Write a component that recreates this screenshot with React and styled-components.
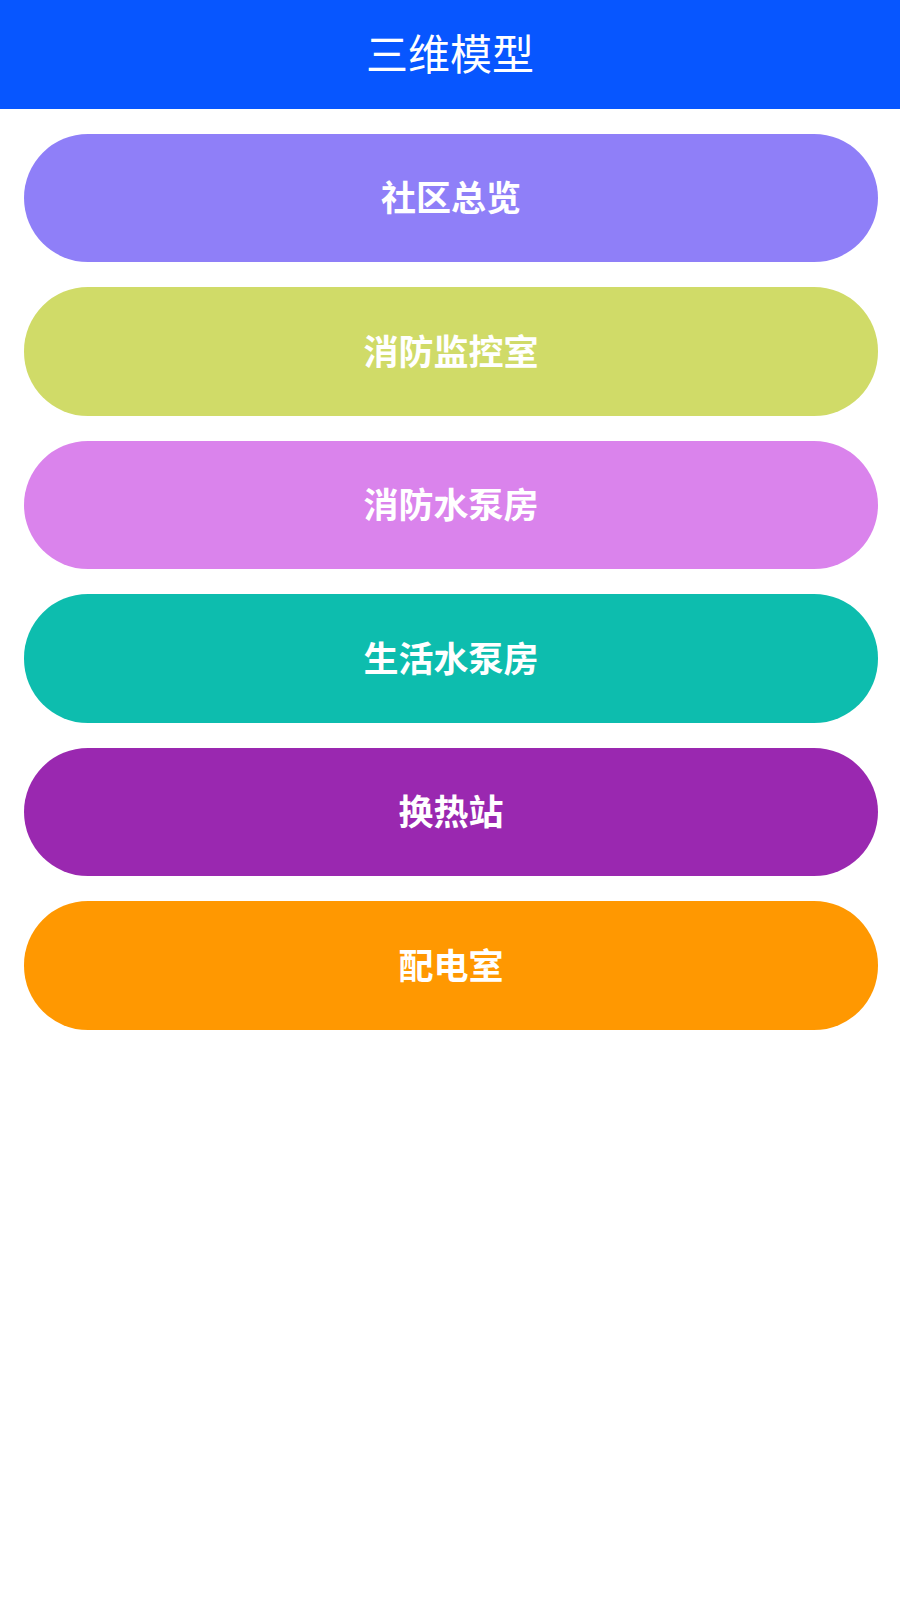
import React from "react";
import styled, { createGlobalStyle } from "styled-components";

const GlobalStyle = createGlobalStyle`
  html, body {
    margin: 0;
    padding: 0;
    background: #ffffff;
  }
  body {
    font-family: "Noto Sans CJK SC", "Noto Sans", sans-serif;
  }
`;

const Page = styled.div`
  width: 900px;
  min-height: 1600px;
  background: #ffffff;
`;

const Header = styled.header`
  height: 109px;
  box-sizing: border-box;
  padding-bottom: 6px;
  background: #0756ff;
  display: flex;
  align-items: center;
  justify-content: center;
`;

const Title = styled.h1`
  margin: 0;
  color: #ffffff;
  font-size: 42px;
  font-weight: 400;
  line-height: 1;
  letter-spacing: 0;
`;

const List = styled.nav`
  display: flex;
  flex-direction: column;
  gap: 25px;
  padding: 24.5px 22px 0 24px;
`;

const PillButton = styled.button`
  height: 128.5px;
  box-sizing: border-box;
  border: none;
  border-radius: 64px;
  background: ${(p) => p.$bg};
  color: #ffffff;
  font-family: "Noto Sans CJK SC", "Noto Sans", sans-serif;
  font-size: 35px;
  font-weight: 700;
  line-height: 1;
  display: flex;
  align-items: center;
  justify-content: center;
  padding: 0 0 4px;
  cursor: pointer;
`;

const items = [
  { label: "社区总览", color: "#8f7ff8" },
  { label: "消防监控室", color: "#d0db68" },
  { label: "消防水泵房", color: "#da83ec" },
  { label: "生活水泵房", color: "#0dbdae" },
  { label: "换热站", color: "#9a28b0" },
  { label: "配电室", color: "#ff9801" },
];

export default function App() {
  return (
    <Page>
      <GlobalStyle />
      <Header>
        <Title>三维模型</Title>
      </Header>
      <List>
        {items.map((it) => (
          <PillButton key={it.label} $bg={it.color}>
            {it.label}
          </PillButton>
        ))}
      </List>
    </Page>
  );
}
